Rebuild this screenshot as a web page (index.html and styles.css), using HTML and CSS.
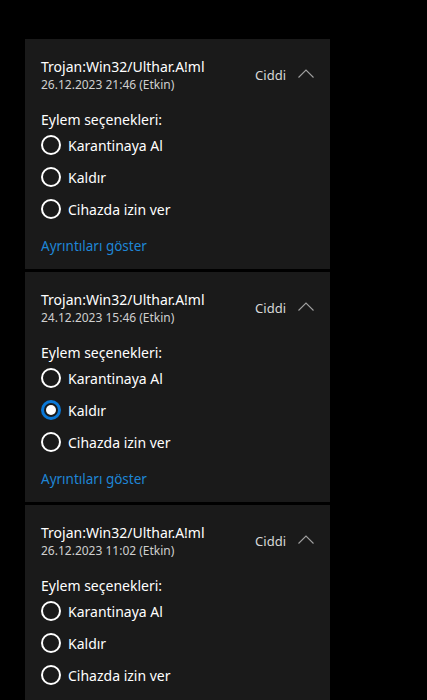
FILE: index.html
```html
<!DOCTYPE html>
<html lang="tr">
<head>
<meta charset="utf-8">
<link rel="stylesheet" href="styles.css">
</head>
<body>
<div class="panel">
  <section class="card">
    <div class="head">
      <div class="info">
        <div class="title">Trojan:Win32/Ulthar.A!ml</div>
        <div class="date">26.12.2023 21:46 (Etkin)</div>
      </div>
      <div class="level">
        <span class="sev">Ciddi</span>
        <svg class="chev" width="16" height="9" viewBox="0 0 16 9"><path d="M0.5 8.5 L8 1 L15.5 8.5" fill="none" stroke="#a0a0a0" stroke-width="1.1"/></svg>
      </div>
    </div>
    <div class="label">Eylem seçenekleri:</div>
    <ul class="opts">
      <li><span class="radio"></span>Karantinaya Al</li>
      <li><span class="radio"></span>Kaldır</li>
      <li><span class="radio"></span>Cihazda izin ver</li>
    </ul>
    <a class="link">Ayrıntıları göster</a>
  </section>
  <section class="card">
    <div class="head">
      <div class="info">
        <div class="title">Trojan:Win32/Ulthar.A!ml</div>
        <div class="date">24.12.2023 15:46 (Etkin)</div>
      </div>
      <div class="level">
        <span class="sev">Ciddi</span>
        <svg class="chev" width="16" height="9" viewBox="0 0 16 9"><path d="M0.5 8.5 L8 1 L15.5 8.5" fill="none" stroke="#a0a0a0" stroke-width="1.1"/></svg>
      </div>
    </div>
    <div class="label">Eylem seçenekleri:</div>
    <ul class="opts">
      <li><span class="radio"></span>Karantinaya Al</li>
      <li><span class="radio on"></span>Kaldır</li>
      <li><span class="radio"></span>Cihazda izin ver</li>
    </ul>
    <a class="link">Ayrıntıları göster</a>
  </section>
  <section class="card">
    <div class="head">
      <div class="info">
        <div class="title">Trojan:Win32/Ulthar.A!ml</div>
        <div class="date">26.12.2023 11:02 (Etkin)</div>
      </div>
      <div class="level">
        <span class="sev">Ciddi</span>
        <svg class="chev" width="16" height="9" viewBox="0 0 16 9"><path d="M0.5 8.5 L8 1 L15.5 8.5" fill="none" stroke="#a0a0a0" stroke-width="1.1"/></svg>
      </div>
    </div>
    <div class="label">Eylem seçenekleri:</div>
    <ul class="opts">
      <li><span class="radio"></span>Karantinaya Al</li>
      <li><span class="radio"></span>Kaldır</li>
      <li><span class="radio"></span>Cihazda izin ver</li>
    </ul>
    <a class="link">Ayrıntıları göster</a>
  </section>
</div>
</body>
</html>
```

FILE: styles.css
```css
html, body {
  margin: 0;
  padding: 0;
  background: #000;
  height: 100%;
  overflow: hidden;
}
body {
  font-family: "Segoe UI", "Noto Sans", "Open Sans", sans-serif;
  color: #fff;
}
.panel {
  margin: 39px 0 0 25px;
  width: 305px;
  display: flex;
  flex-direction: column;
  gap: 3px;
}
.card {
  background: #1a1a1a;
  padding: 18px 16px 13px 16px;
  display: flex;
  flex-direction: column;
}
.head {
  display: flex;
  align-items: center;
  justify-content: space-between;
}
.title {
  font-size: 14px;
  line-height: 20px;
  color: #fff;
}
.date {
  font-size: 12px;
  line-height: 16px;
  color: #cfcfcf;
}
.level {
  display: flex;
  align-items: center;
  gap: 12px;
}
.sev {
  font-size: 13px;
  line-height: 18px;
  color: #d8d8d8;
}
.chev {
  display: block;
  margin-top: -3px;
}
.label {
  margin-top: 17px;
  font-size: 14px;
  line-height: 20px;
}
.opts {
  list-style: none;
  margin: -1px 0 0 0;
  padding: 0;
}
.opts li {
  height: 32px;
  display: flex;
  align-items: center;
  gap: 7px;
  font-size: 14px;
}
.radio {
  width: 20px;
  height: 20px;
  box-sizing: border-box;
  border: 2px solid #fff;
  border-radius: 50%;
  flex: none;
}
.radio.on {
  border: 3px solid #0a78d7;
  background: #0a78d7;
  position: relative;
}
.radio.on::after {
  content: "";
  position: absolute;
  left: 50%;
  top: 50%;
  width: 10px;
  height: 10px;
  margin: -5px 0 0 -5px;
  border-radius: 50%;
  background: #fff;
  box-shadow: 0 0 0 2px #1a1a1a;
}
.link {
  margin-top: 11px;
  font-size: 13.5px;
  line-height: 20px;
  color: #1f86d6;
}
```
